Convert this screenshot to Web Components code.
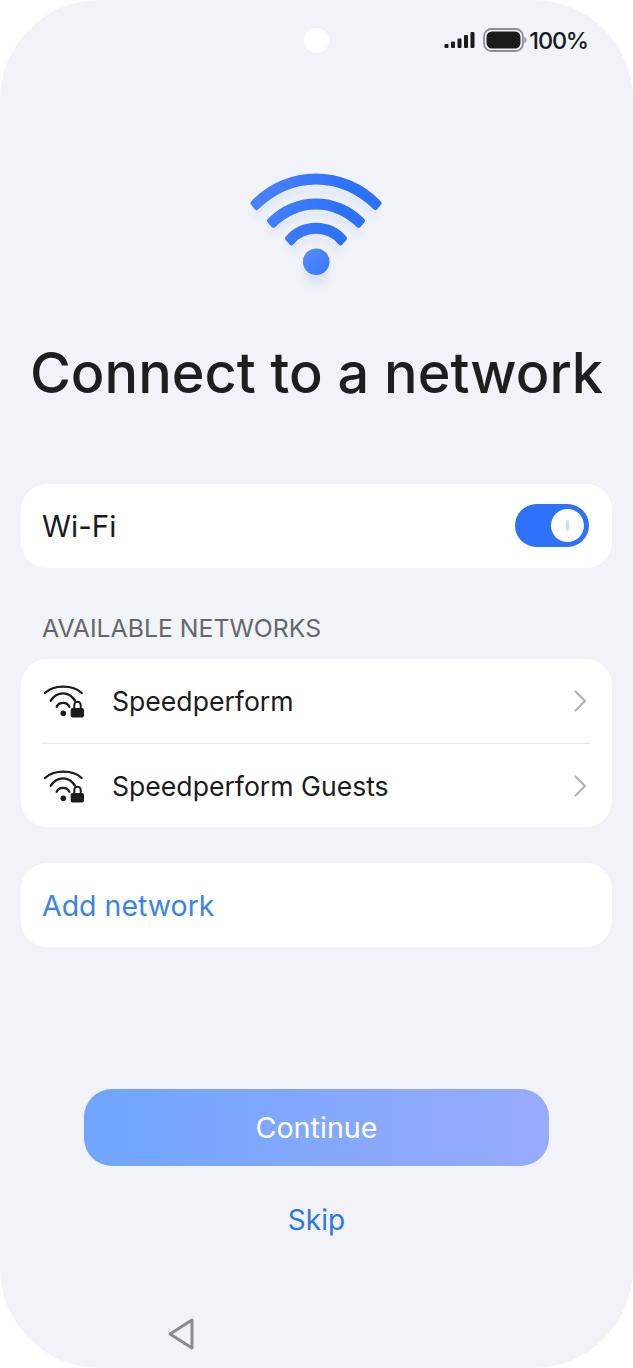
<!DOCTYPE html>
<html>
<head>
<meta charset="utf-8">
<title>Connect to a network</title>
<style>
  html, body { margin: 0; padding: 0; background: #fff; }
  body { font-family: Inter, "Noto Sans", "Liberation Sans", sans-serif; color: #1b1b1b; }
</style>
</head>
<body>
<template id="phone-screen">
  <style>
    :host {
      display: flex;
      flex-direction: column;
      box-sizing: border-box;
      width: 633px;
      height: 1368px;
      background: #f1f3f8;
      border-radius: 100px;
      position: relative;
      overflow: hidden;
    }
    .hole {
      position: absolute;
      left: 304px;
      top: 28px;
      width: 25px;
      height: 25px;
      border-radius: 50%;
      background: #fff;
    }
  </style>
  <div class="hole"></div>
  <slot></slot>
</template>

<template id="status-bar">
  <style>
    :host {
      display: flex;
      align-items: center;
      justify-content: flex-end;
      height: 28px;
      padding: 26px 45px 0 0;
      font-size: 23.500px;
      font-weight: 500;
      letter-spacing: -1.200px;
      color: #1b1b1b;
    }
    svg { display: block; }
    .sig { margin-right: 8px; }
    .bat { margin-right: 2px; }
  </style>
  <svg class="sig" width="31" height="18" viewBox="0 0 31 18">
    <rect x="0.500" y="13" width="4" height="4" rx="1" fill="#1b1b1b"/>
    <rect x="7" y="10.500" width="4" height="6.500" rx="1" fill="#1b1b1b"/>
    <rect x="13.500" y="7.500" width="4" height="9.500" rx="1" fill="#1b1b1b"/>
    <rect x="20" y="4" width="4" height="13" rx="1" fill="#1b1b1b"/>
    <rect x="26.500" y="1" width="4" height="16" rx="1" fill="#1b1b1b"/>
  </svg>
  <svg class="bat" width="44" height="24" viewBox="0 0 44 24">
    <rect x="1" y="1" width="39" height="22" rx="7.500" fill="none" stroke="#8e8e8e" stroke-width="1.800"/>
    <rect x="3.500" y="3.500" width="34" height="17" rx="5.500" fill="#1b1b1b"/>
    <path d="M41.500 9c1.300.6 2 1.700 2 3s-.7 2.400-2 3z" fill="#8e8e8e"/>
  </svg>
  <span>100%</span>
</template>

<template id="wifi-hero">
  <style>
    :host { display: flex; justify-content: center; margin-top: 96px; }
    svg { display: block; overflow: visible; }
  </style>
  <svg width="170" height="150" viewBox="0 0 170 150">
    <defs>
      <linearGradient id="g" gradientUnits="userSpaceOnUse" x1="20" y1="50" x2="150" y2="80">
        <stop offset="0" stop-color="#4a82fb"/>
        <stop offset="0.700" stop-color="#2c71fb"/>
        <stop offset="1" stop-color="#2c71fb"/>
      </linearGradient>
      <linearGradient id="d" x1="0" y1="0" x2="1" y2="1">
        <stop offset="0" stop-color="#5a8cfb"/>
        <stop offset="1" stop-color="#3276fb"/>
      </linearGradient>
      <filter id="b" x="-30%" y="-30%" width="160%" height="170%"><feGaussianBlur stdDeviation="5"/></filter>
      <path id="a1" d="M21 53.100C55 16.900 113 16.900 147 53.100L143.500 57.500C108 23.500 60 23.500 24.500 57.500Z"/>
      <path id="a2" d="M37.500 70.800C62 44.400 106 44.400 130.500 70.800L126.500 75.200C101 50.900 67 50.900 41.500 75.200Z"/>
      <path id="a3" d="M55.500 88.400C70 70.900 98 70.900 112.500 88.400L108.500 92.800C96 77.500 72 77.500 59.500 92.800Z"/>
    </defs>
    <g fill="#8ea9ee" fill-opacity=".26" filter="url(#b)" transform="translate(0 10)">
      <use href="#a1"/><use href="#a2"/><use href="#a3"/>
      <circle cx="84.200" cy="113" r="12"/>
    </g>
    <g fill="url(#g)" stroke="url(#g)" stroke-width="5" stroke-linejoin="round">
      <use href="#a1"/><use href="#a2"/><use href="#a3"/>
    </g>
    <circle cx="84.200" cy="111.700" r="13.300" fill="url(#d)"/>
  </svg>
</template>

<template id="page-title">
  <style>
    :host {
      display: block;
      text-align: center;
      font-size: 55.800px;
      font-weight: 450;
      line-height: 72px;
      color: #1e1e1e;
      white-space: nowrap;
      margin-top: 37px;
    }
  </style>
  <slot></slot>
</template>

<template id="list-card">
  <style>
    :host {
      display: block;
      margin: 0 21px;
      background: #fff;
      border-radius: 26px;
      overflow: hidden;
    }
  </style>
  <slot></slot>
</template>

<template id="toggle-row">
  <style>
    :host {
      display: flex;
      align-items: center;
      justify-content: space-between;
      height: 84px;
      padding: 0 23px 0 21px;
      font-size: 29.500px;
      color: #1b1b1b;
    }
    .sw {
      box-sizing: border-box;
      width: 74px;
      height: 43px;
      margin-bottom: 1px;
      border-radius: 21.500px;
      background: #2e72fa;
      display: flex;
      justify-content: flex-end;
      align-items: center;
      padding-right: 5px;
    }
    .knob {
      width: 33px;
      height: 33px;
      border-radius: 50%;
      background: #fff;
      display: flex;
      align-items: center;
      justify-content: center;
    }
    .knob i { display: block; width: 3px; height: 11px; border-radius: 2px; background: #cfdcf9; }
  </style>
  <span><slot></slot></span>
  <div class="sw"><div class="knob"><i></i></div></div>
</template>

<template id="section-label">
  <style>
    :host {
      display: block;
      margin: 44px 42px 15px;
      font-size: 24.800px;
      line-height: 32px;
      color: #66676b;
      white-space: nowrap;
    }
  </style>
  <slot></slot>
</template>

<template id="network-row">
  <style>
    :host {
      display: block;
      padding: 0 21px;
    }
    .row {
      display: flex;
      align-items: center;
      box-sizing: border-box;
      height: 83px;
      padding-top: 1px;
      font-size: 26.600px;
      color: #1b1b1b;
    }
    :host([divider]) .row { height: 85px; padding-top: 0; border-bottom: 1px solid #e5e5e7; }
    .wifi { display: block; flex: none; margin-right: 27px; }
    .name { flex: 1; }
    .chev { display: block; flex: none; margin-right: 4px; }
  </style>
  <div class="row">
    <svg class="wifi" width="43" height="34" viewBox="0 0 43 34">
      <g fill="none" stroke="#1b1b1b" stroke-width="2.300" stroke-linecap="round">
        <path d="M3 9C12 0.600 30.700 0.600 39.700 9"/>
        <path d="M8.700 16.700C15 6.800 27 6.800 33 16.700"/>
        <path d="M14.700 22.700C17 17.700 25 17.700 27.300 22.700"/>
      </g>
      <circle cx="21.300" cy="29.300" r="2.800" fill="#1b1b1b"/>
      <path d="M32.300 24V21a3.200 3.200 0 0 1 6.400 0V24" fill="none" stroke="#1b1b1b" stroke-width="2"/>
      <rect x="28.700" y="24" width="13.300" height="9.500" rx="2" fill="#1b1b1b"/>
    </svg>
    <span class="name"><slot></slot></span>
    <svg class="chev" width="13" height="22" viewBox="0 0 13 22">
      <path d="M1.500 1.500L11 11L1.500 20.500" fill="none" stroke="#b3b3b5" stroke-width="2.200" stroke-linecap="round" stroke-linejoin="round"/>
    </svg>
  </div>
</template>

<template id="link-row">
  <style>
    :host {
      display: flex;
      align-items: center;
      height: 84px;
      padding: 0 21px;
      font-size: 28.500px;
      color: #3c83e6;
    }
  </style>
  <slot></slot>
</template>

<template id="primary-actions">
  <style>
    :host {
      display: flex;
      flex-direction: column;
      align-items: center;
      margin-top: 142px;
    }
    .btn {
      width: 465px;
      height: 77px;
      border-radius: 28px;
      background: linear-gradient(90deg, #6fa5fd, #98abfd);
      color: #fff;
      font-size: 28.700px;
      display: flex;
      align-items: center;
      justify-content: center;
    }
    .skip {
      margin-top: 33px;
      font-size: 28px;
      line-height: 42px;
      color: #2f76e2;
    }
  </style>
  <div class="btn"><slot name="primary"></slot></div>
  <div class="skip"><slot name="secondary"></slot></div>
</template>

<template id="nav-bar">
  <style>
    :host {
      display: flex;
      margin-top: auto;
      height: 70px;
      padding-left: 168px;
      box-sizing: border-box;
    }
    svg { display: block; margin-top: 20px; }
  </style>
  <svg width="26" height="32" viewBox="0 0 26 32">
    <path d="M24 2L2 16L24 30Z" fill="none" stroke="#8b8b8d" stroke-width="3" stroke-linejoin="round"/>
  </svg>
</template>

<phone-screen>
  <status-bar></status-bar>
  <wifi-hero></wifi-hero>
  <page-title>Connect to a network</page-title>
  <list-card style="margin-top:75px"><toggle-row>Wi-Fi</toggle-row></list-card>
  <section-label>AVAILABLE NETWORKS</section-label>
  <list-card>
    <network-row divider>Speedperform</network-row>
    <network-row>Speedperform Guests</network-row>
  </list-card>
  <list-card style="margin-top:36px"><link-row>Add network</link-row></list-card>
  <primary-actions>
    <span slot="primary">Continue</span>
    <span slot="secondary">Skip</span>
  </primary-actions>
  <nav-bar></nav-bar>
</phone-screen>

<script>
  (function() {
    ['phone-screen','status-bar','wifi-hero','page-title','list-card','toggle-row',
     'section-label','network-row','link-row','primary-actions','nav-bar'].forEach(function(name) {
      class El extends HTMLElement {
        constructor() {
          super();
          let shadowRoot = this.attachShadow({mode: 'open'});
          shadowRoot.appendChild(document.importNode(document.getElementById(name).content, true));
        }
      }
      customElements.define(name, El);
    });
  })();
</script>
</body>
</html>
